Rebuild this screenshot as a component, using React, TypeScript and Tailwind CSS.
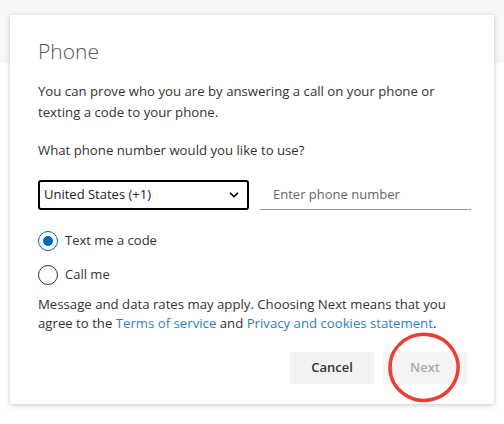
import { ChevronDown } from 'lucide-react';

export default function App() {
  return (
    <div className="relative h-[424px] w-[504px] overflow-hidden bg-white font-['Open_Sans',sans-serif]">
      <div className="absolute inset-x-0 top-0 h-[63px] bg-[#f7f7f7]" />
      <div className="relative mx-[10px] mt-[15px] h-[389px] bg-white pl-[28px] pr-[23px] pt-[21px] shadow-[0_1px_5px_rgba(0,0,0,0.22)]">
        <h1 className="text-[21px] font-light leading-[30px] text-[#555]">Phone</h1>

        <p className="mt-[15px] pr-[6px] text-[13.2px] leading-[21px] text-[#333]">
          You can prove who you are by answering a call on your phone or texting a code to your phone.
        </p>

        <p className="mt-[17px] text-[13.2px] leading-[20px] text-[#333]">What phone number would you like to use?</p>

        <div className="mt-[20px] flex items-end gap-[11px]">
          <div className="flex h-[30px] w-[211px] items-center justify-between rounded-[3px] border-2 border-black pl-[4px] pr-[6px]">
            <span className="text-[13px] text-[#222]">United States (+1)</span>
            <ChevronDown className="h-[14px] w-[14px] text-black" strokeWidth={3} />
          </div>
          <div className="flex h-[30px] flex-1 items-center border-b border-[#999] pl-[13px]">
            <span className="text-[13px] text-[#666]">Enter phone number</span>
          </div>
        </div>

        <div className="mt-[21px] flex flex-col gap-[14px]">
          <label className="flex items-center gap-[7px]">
            <span className="flex h-[20px] w-[20px] items-center justify-center rounded-full border border-[#0067b8]">
              <span className="h-[10px] w-[10px] rounded-full bg-[#0067b8]" />
            </span>
            <span className="text-[13px] text-[#333]">Text me a code</span>
          </label>
          <label className="flex items-center gap-[7px]">
            <span className="h-[20px] w-[20px] rounded-full border border-[#333]" />
            <span className="text-[13px] text-[#333]">Call me</span>
          </label>
        </div>

        <p className="mt-[10px] pr-[6px] text-[13.2px] leading-[19px] text-[#333]">
          Message and data rates may apply. Choosing Next means that you agree to the{' '}
          <span className="text-[#2f7fc1]">Terms of service</span> and{' '}
          <span className="text-[#2f7fc1]">Privacy and cookies statement</span>.
        </p>

        <div className="mt-[19px] mr-[4px] flex justify-end gap-[9px]">
          <div className="flex h-[32px] w-[84px] items-center justify-center bg-[#f2f2f2] text-[13px] font-semibold text-[#333]">
            Cancel
          </div>
          <div className="relative flex h-[32px] w-[84px] items-center justify-center bg-[#f4f4f4] text-[13px] font-semibold text-[#aaa]">
            Next
            <svg className="absolute left-[0px] top-[-24px] h-[80px] w-[80px]" viewBox="0 0 80 80" fill="none">
              <path
                d="M16 17 A34 33 0 1 1 7 40 C7 32 9 25 14 19"
                stroke="#ee3d33"
                strokeWidth={3.5}
                strokeLinecap="round"
              />
            </svg>
          </div>
        </div>
      </div>
    </div>
  );
}
